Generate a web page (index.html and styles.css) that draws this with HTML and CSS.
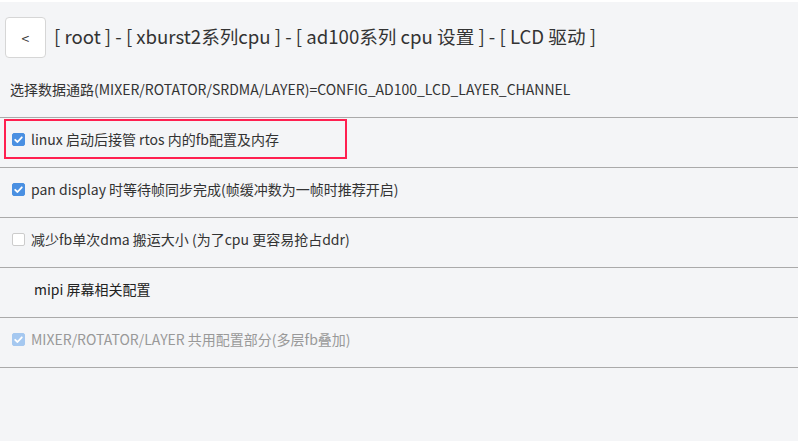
FILE: index.html
```html
<!DOCTYPE html>
<html lang="zh-CN">
<head>
<meta charset="utf-8">
<link rel="stylesheet" href="styles.css">
</head>
<body>
<div class="page">
  <header class="header">
    <button class="back">&lt;</button>
    <h1 class="title">[ root ] - [ xburst2系列cpu ] - [ ad100系列 cpu 设置 ] - [ LCD 驱动 ]</h1>
  </header>
  <div class="info">选择数据通路(MIXER/ROTATOR/SRDMA/LAYER)=CONFIG_AD100_LCD_LAYER_CHANNEL</div>
  <ul class="list">
    <li class="row">
      <span class="item selected"><span class="cb checked"><svg viewBox="0 0 13 13"><path d="M3.2 6.8 L5.5 9 L9.8 4.3" fill="none" stroke="#fff" stroke-width="1.8" stroke-linecap="round" stroke-linejoin="round"/></svg></span>linux 启动后接管 rtos 内的fb配置及内存</span>
    </li>
    <li class="row">
      <span class="item"><span class="cb checked"><svg viewBox="0 0 13 13"><path d="M3.2 6.8 L5.5 9 L9.8 4.3" fill="none" stroke="#fff" stroke-width="1.8" stroke-linecap="round" stroke-linejoin="round"/></svg></span>pan display 时等待帧同步完成(帧缓冲数为一帧时推荐开启)</span>
    </li>
    <li class="row">
      <span class="item"><span class="cb"></span>减少fb单次dma 搬运大小 (为了cpu 更容易抢占ddr)</span>
    </li>
    <li class="row">
      <span class="item menu">mipi 屏幕相关配置</span>
    </li>
    <li class="row">
      <span class="item disabled"><span class="cb checked"><svg viewBox="0 0 13 13"><path d="M3.2 6.8 L5.5 9 L9.8 4.3" fill="none" stroke="#fff" stroke-width="1.8" stroke-linecap="round" stroke-linejoin="round"/></svg></span>MIXER/ROTATOR/LAYER 共用配置部分(多层fb叠加)</span>
    </li>
  </ul>
</div>
</body>
</html>
```

FILE: styles.css
```css
* { box-sizing: border-box; }
html, body {
  margin: 0;
  padding: 0;
  background: #f4f5f7;
  font-family: "Noto Sans CJK SC", "Noto Sans", sans-serif;
  color: #333;
}
.page {
  width: 798px;
  height: 441px;
  border-top: 2px solid #fff;
  overflow: hidden;
}
.header {
  display: flex;
  align-items: center;
  padding: 14px 5px 0 5px;
  height: 57px;
}
.back {
  width: 41px;
  height: 41px;
  background: #fff;
  border: 1px solid #d6d6d6;
  border-radius: 4px;
  font-family: "Noto Sans CJK SC", sans-serif;
  font-size: 14px;
  color: #333;
  padding: 0;
  margin: 0 8px 0 0;
}
.title {
  margin: 0 0 3px 0;
  font-size: 18.6px;
  font-weight: normal;
  color: #333;
  line-height: 24px;
}
.info {
  font-size: 14px;
  color: #333;
  padding: 2px 10px 0 10px;
  height: 59px;
  display: flex;
  align-items: center;
  border-bottom: 1px solid #aaa;
}
.list {
  list-style: none;
  margin: 0;
  padding: 0;
}
.row {
  height: 50px;
  border-bottom: 1px solid #aaa;
  display: flex;
  align-items: flex-start;
  padding: 1px 4px 0 4px;
}
.item {
  display: flex;
  align-items: center;
  font-size: 14px;
  color: #333;
  height: 40px;
  padding: 0 6px;
}
.item.selected {
  border: 2px solid #ff2050;
  width: 343px;
  padding: 0 6px;
}
.item.menu {
  padding-left: 30px;
  color: #222;
}
.item.disabled {
  color: #999;
}
.cb {
  width: 13px;
  height: 13px;
  border: 1px solid #ccc;
  border-radius: 2px;
  background: #fff;
  margin: 0 6px 0 2px;
  display: inline-flex;
  flex: none;
}
.selected .cb { margin-left: 0; }
.cb svg { width: 13px; height: 13px; display: block; margin: -1px; }
.cb.checked {
  background: #4a90e2;
  border-color: #4a90e2;
}
.disabled .cb.checked {
  background: #a5c8f0;
  border-color: #a5c8f0;
}
```
